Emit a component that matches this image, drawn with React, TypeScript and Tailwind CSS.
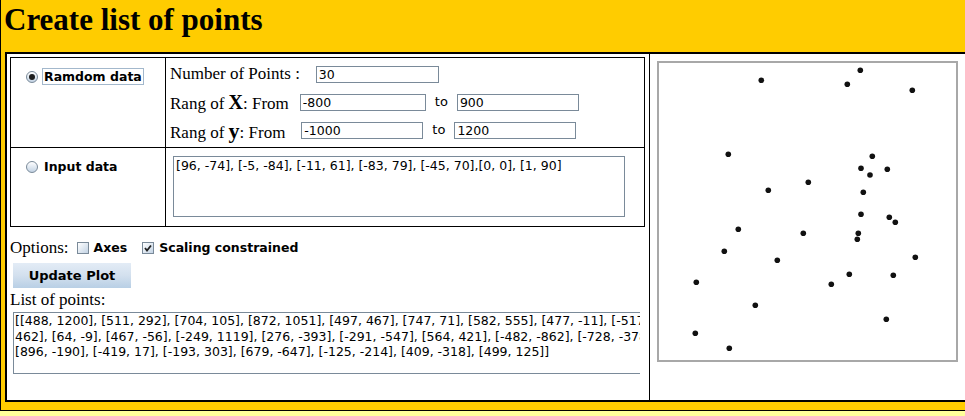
import { useState } from 'react'

const SERIF = { fontFamily: '"Liberation Serif", "Times New Roman", serif' }

// dots of the scatter plot, in px inside the plot area
const POINTS: [number, number][] = [
  [201.3, 7.3], [102.3, 17.3], [188.3, 21.3], [253.3, 27.3], [69.3, 91.3],
  [213.3, 93.3], [202, 105.3], [228.3, 106.3], [211, 112], [149.3, 119.3],
  [109.3, 127.3], [204.3, 129.3], [202, 151.3], [230.3, 154.3], [236.3, 159.3],
  [79.3, 166.3], [144.3, 170.3], [199.3, 170.3], [198.3, 176.3], [65.3, 188.3],
  [256.3, 194.3], [118.3, 197.3], [190.3, 211.3], [234.3, 212.3], [37.3, 219.3],
  [172.3, 221.3], [96.3, 242.3], [227.3, 256.3], [36.3, 270.3], [70.3, 285.3],
]

const LIST_LINES = [
  '[[488, 1200], [511, 292], [704, 105], [872, 1051], [497, 467], [747, 71], [582, 555], [477, -11], [-517,',
  '462], [64, -9], [467, -56], [-249, 1119], [276, -393], [-291, -547], [564, 421], [-482, -862], [-728, -378],',
  '[896, -190], [-419, 17], [-193, 303], [679, -647], [-125, -214], [409, -318], [499, 125]]',
]

function Radio({ checked }: { checked: boolean }) {
  return (
    <span className="flex h-[12px] w-[12px] items-center justify-center rounded-full border border-[#7a8a99] bg-linear-to-b from-white to-[#c3d3e4]">
      {checked && <span className="h-[6px] w-[6px] rounded-full bg-[#1e1e1e]" />}
    </span>
  )
}

function Checkbox({ checked }: { checked: boolean }) {
  return (
    <span className="flex h-[12px] w-[12px] items-center justify-center border border-[#7a8a99] bg-linear-to-br from-white to-[#c3d3e4]">
      {checked && (
        <svg width="10" height="10" viewBox="0 0 10 10">
          <path d="M2 5 L4 7.5 L8 2.5" fill="none" stroke="#222" strokeWidth="1.8" />
        </svg>
      )}
    </span>
  )
}

function Field({ value, w }: { value: string; w: string }) {
  return (
    <input
      readOnly
      value={value}
      className={`h-[17px] border border-[#7a8a99] bg-white px-[2px] text-[12.5px] leading-none text-black outline-none ${w}`}
    />
  )
}

export default function App() {
  const [mode] = useState<'random' | 'input'>('random')

  return (
    <div
      className="flex h-[416px] w-[965px] flex-col overflow-hidden bg-[#ffcc00] text-black"
      style={{ fontFamily: '"DejaVu Sans", Verdana, sans-serif' }}
    >
      <div className="flex-1 border-l border-black">
        <h1 className="h-[52px] pt-[3px] pl-[3px] text-[31px] leading-[34px] font-bold" style={SERIF}>
          Create list of points
        </h1>

        <div className="ml-[4px] flex h-[350px] border-y-2 border-l-2 border-black bg-white">
          {/* left: form */}
          <div className="w-[643px] shrink-0 border-r border-black pt-[3px] pl-[3px]">
            <div className="w-[635px] border border-black">
              <div className="flex h-[90px] border-b border-black">
                <div className="w-[155px] shrink-0 border-r border-black pt-[10px] pl-[15px]">
                  <div className="flex h-[17px] items-center gap-[4px]">
                    <Radio checked={mode === 'random'} />
                    <span className="border border-[#a3b8cc] px-[1px] text-[12.5px] leading-[15px] font-bold">Ramdom data</span>
                  </div>
                </div>
                <div className="pt-[2px] pl-[4px]">
                  <div className="flex h-[28px] items-center">
                    <span className="text-[17px]" style={SERIF}>Number of Points :</span>
                    <span className="ml-[16px]"><Field value="30" w="w-[123px]" /></span>
                  </div>
                  <div className="flex h-[28px] items-center">
                    <span className="text-[17px]" style={SERIF}>
                      Rang of <b className="text-[20px]">X</b>: From
                    </span>
                    <span className="ml-[11px]"><Field value="-800" w="w-[126px]" /></span>
                    <span className="ml-[9px] text-[13px]">to</span>
                    <span className="ml-[9px]"><Field value="900" w="w-[122px]" /></span>
                  </div>
                  <div className="flex h-[28px] items-center">
                    <span className="text-[17px]" style={SERIF}>
                      Rang of <b className="text-[22px]">y</b>: From
                    </span>
                    <span className="ml-[16px]"><Field value="-1000" w="w-[122px]" /></span>
                    <span className="ml-[9px] text-[13px]">to</span>
                    <span className="ml-[9px]"><Field value="1200" w="w-[122px]" /></span>
                  </div>
                </div>
              </div>
              <div className="flex h-[78px]">
                <div className="w-[155px] shrink-0 border-r border-black pt-[10px] pl-[15px]">
                  <div className="flex h-[17px] items-center gap-[4px]">
                    <Radio checked={mode === 'input'} />
                    <span className="border border-transparent px-[1px] text-[12.5px] leading-[15px] font-bold">Input data</span>
                  </div>
                </div>
                <div className="pt-[8px] pl-[7px]">
                  <div className="h-[61px] w-[452px] border border-[#7a8a99] px-[2px] pt-[1px] text-[12.5px] leading-[15px]">
                    [96, -74], [-5, -84], [-11, 61], [-83, 79], [-45, 70],[0, 0], [1, 90]
                  </div>
                </div>
              </div>
            </div>

            <div className="mt-[11px] flex h-[20px] items-center">
              <span className="text-[17px]" style={SERIF}>Options:</span>
              <span className="ml-[8px]"><Checkbox checked={false} /></span>
              <span className="ml-[5px] text-[12.5px] font-bold">Axes</span>
              <span className="ml-[15px]"><Checkbox checked /></span>
              <span className="ml-[5px] text-[12.5px] font-bold">Scaling constrained</span>
            </div>

            <button className="mt-[5px] ml-[3px] h-[25px] w-[118px] bg-linear-to-b from-[#e3ecf6] via-[#d3e0ee] to-[#b8cfe5] text-[13px] font-bold">
              Update Plot
            </button>

            <div className="mt-[2px] h-[20px] text-[17px] leading-[20px]" style={SERIF}>
              List of points:
            </div>

            <div className="mt-[2px] ml-[3px] h-[62px] w-[627px] overflow-hidden border-y border-l border-[#7a8a99] pl-[1px] text-[12.5px] leading-[15.5px] whitespace-nowrap">
              {LIST_LINES.map((line, i) => (
                <div key={i}>{line}</div>
              ))}
            </div>
          </div>

          {/* right: plot */}
          <div className="pt-[7px] pl-[7px]">
            <div className="h-[301px] w-[301px] border-2 border-[#a8a8a8] bg-white">
              <svg width="297" height="297">
                {POINTS.map(([x, y], i) => (
                  <circle key={i} cx={x} cy={y} r="2.8" fill="#111" />
                ))}
              </svg>
            </div>
          </div>
        </div>
      </div>
      <div className="h-[6px] shrink-0 border-t border-black bg-[#ffff99]" />
    </div>
  )
}
